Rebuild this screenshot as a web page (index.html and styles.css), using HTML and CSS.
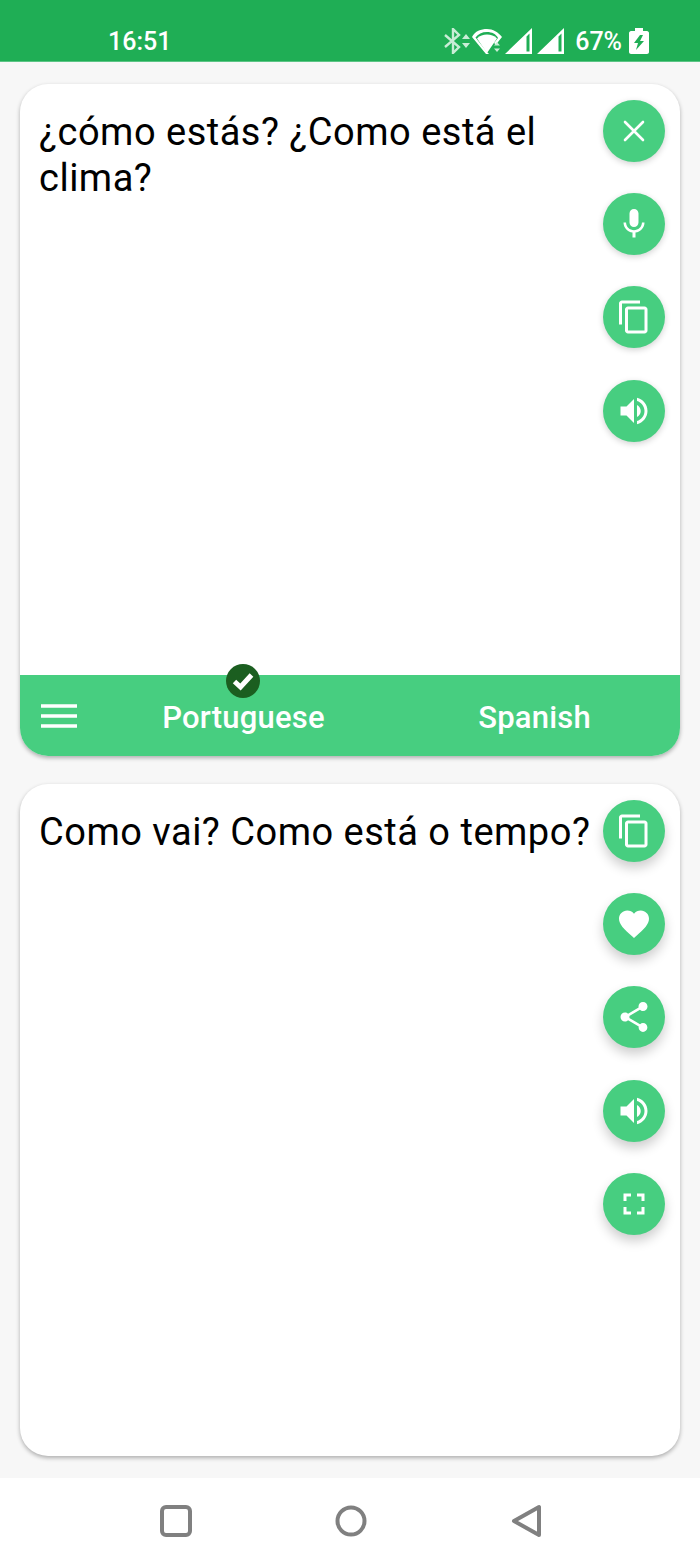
FILE: index.html

```html
<!DOCTYPE html>
<html lang="en">
<head>
    <meta charset="UTF-8">
    <meta name="viewport" content="width=device-width, initial-scale=1.0">
    <title>Translator</title>
    <link rel="stylesheet" href="styles.css">
</head>
<body>
    <!-- Status bar -->
    <header class="status-bar">
        <span class="time">16:51</span>
        <div class="status-icons">
            <svg class="icon-bt" viewBox="0 0 28 26" width="28" height="26">
                <path d="M2 7l14 12-6 6V1l6 6L2 19" fill="none" stroke="#c9edd6" stroke-width="2.400"/>
                <path d="M19 11l4-5 4 5zM19 15l4 5 4-5z" fill="#c9edd6"/>
            </svg>
            <svg class="icon-wifi" viewBox="0 0 30 26" width="30" height="26">
                <path d="M0 9C3 3 9 1 15 1s11 3 15 8l-6 7.500-2-1.500 4-5C24 6 20 4 15 4S6 6 3.500 9.500L15 24l2 2h-3z" fill="#fff"/>
                <path d="M5 10.500C8 7.500 11 6.500 15 6.500s7 1 10 4L15 25z" fill="#fff"/>
                <path d="M22 17.500l3-3.500 3 3.500zM22 20.500l3 3.500 3-3.500z" fill="#c9edd6"/>
            </svg>
            <svg class="icon-signal" viewBox="0 0 27 26" width="27" height="26">
                <path fill-rule="evenodd" d="M27 0v26H0zM21.500 8.500V23.500h3V5.500z" fill="#fff"/>
            </svg>
            <svg class="icon-signal" viewBox="0 0 27 26" width="27" height="26">
                <path fill-rule="evenodd" d="M27 0v26H0zM21.500 8.500V23.500h3V5.500z" fill="#fff"/>
            </svg>
            <span class="battery-text">67%</span>
            <svg class="icon-battery" viewBox="0 0 20 26" width="20" height="26">
                <path fill-rule="evenodd" d="M6 0h8v3h4c1 0 2 1 2 2v19c0 1-1 2-2 2H2c-1 0-2-1-2-2V5c0-1 1-2 2-2h4zM11 7l-6 8h4l-2 7 8-9h-4l3-6z" fill="#fff"/>
            </svg>
        </div>
    </header>

    <main class="content">
        <!-- Source card -->
        <section class="card">
            <div class="card-body">
                <p class="card-text">¿cómo estás? ¿Como está el clima?</p>
                <div class="fabs">
                    <button class="fab">
                        <svg viewBox="0 0 36 36" width="36" height="36"><path d="M9 9l18 18M27 9L9 27" fill="none" stroke="#fff" stroke-width="2.600" stroke-linecap="round"/></svg>
                    </button>
                    <button class="fab">
                        <svg viewBox="0 0 24 24" width="36" height="36"><path d="M12 14c1.660 0 2.990-1.340 2.990-3L15 5c0-1.660-1.340-3-3-3S9 3.340 9 5v6c0 1.660 1.340 3 3 3zm5.300-3c0 3-2.540 5.100-5.300 5.100S6.700 14 6.700 11H5c0 3.410 2.720 6.230 6 6.720V21h2v-3.280c3.280-.48 6-3.300 6-6.720h-1.700z" fill="#fff"/></svg>
                    </button>
                    <button class="fab">
                        <svg viewBox="0 0 24 24" width="36" height="36"><path d="M16 1H4c-1.100 0-2 .9-2 2v14h2V3h12V1zm3 4H8c-1.100 0-2 .9-2 2v14c0 1.100.9 2 2 2h11c1.100 0 2-.9 2-2V7c0-1.100-.9-2-2-2zm0 16H8V7h11v14z" fill="#fff"/></svg>
                    </button>
                    <button class="fab">
                        <svg viewBox="0 0 24 24" width="36" height="36"><path d="M3 9v6h4l5 5V4L7 9H3zm13.500 3c0-1.770-1.020-3.290-2.500-4.030v8.050c1.480-.73 2.500-2.250 2.500-4.020zM14 3.230v2.060c2.890.86 5 3.540 5 6.710s-2.110 5.850-5 6.710v2.060c4.010-.91 7-4.490 7-8.770s-2.990-7.860-7-8.770z" fill="#fff"/></svg>
                    </button>
                </div>
            </div>
            <div class="lang-bar">
                <svg class="menu-icon" viewBox="0 0 36 24" width="36" height="24"><path d="M0 2h36M0 12h36M0 22h36" stroke="#fff" stroke-width="3.600" fill="none"/></svg>
                <button class="lang">Portuguese
                    <span class="lang-check">
                        <svg viewBox="0 0 34 34" width="34" height="34"><path d="M8.500 17.500l6 5.500 11-12" fill="none" stroke="#fff" stroke-width="5"/></svg>
                    </span>
                </button>
                <button class="lang">Spanish</button>
            </div>
        </section>

        <!-- Result card -->
        <section class="card">
            <div class="card-body">
                <p class="card-text">Como vai? Como está o tempo?</p>
                <div class="fabs fabs-raised">
                    <button class="fab">
                        <svg viewBox="0 0 24 24" width="36" height="36"><path d="M16 1H4c-1.100 0-2 .9-2 2v14h2V3h12V1zm3 4H8c-1.100 0-2 .9-2 2v14c0 1.100.9 2 2 2h11c1.100 0 2-.9 2-2V7c0-1.100-.9-2-2-2zm0 16H8V7h11v14z" fill="#fff"/></svg>
                    </button>
                    <button class="fab">
                        <svg viewBox="0 0 24 24" width="36" height="36"><path d="M12 21.350l-1.450-1.320C5.400 15.360 2 12.280 2 8.500 2 5.420 4.420 3 7.500 3c1.740 0 3.410.81 4.500 2.090C13.090 3.810 14.760 3 16.500 3 19.580 3 22 5.420 22 8.500c0 3.780-3.400 6.860-8.550 11.540L12 21.350z" fill="#fff"/></svg>
                    </button>
                    <button class="fab">
                        <svg viewBox="0 0 24 24" width="36" height="36"><path d="M18 16.080c-.76 0-1.440.3-1.960.77L8.910 12.700c.05-.23.09-.46.09-.7s-.04-.47-.09-.7l7.050-4.110c.54.5 1.250.81 2.040.81 1.660 0 3-1.340 3-3s-1.340-3-3-3-3 1.340-3 3c0 .24.04.47.09.7L8.040 9.810C7.500 9.310 6.790 9 6 9c-1.660 0-3 1.340-3 3s1.340 3 3 3c.79 0 1.500-.31 2.040-.81l7.120 4.160c-.05.21-.08.43-.08.65 0 1.610 1.310 2.920 2.920 2.920s2.920-1.310 2.920-2.920-1.310-2.920-2.920-2.920z" fill="#fff"/></svg>
                    </button>
                    <button class="fab">
                        <svg viewBox="0 0 24 24" width="36" height="36"><path d="M3 9v6h4l5 5V4L7 9H3zm13.500 3c0-1.770-1.020-3.290-2.500-4.030v8.050c1.480-.73 2.500-2.250 2.500-4.020zM14 3.230v2.060c2.890.86 5 3.540 5 6.710s-2.110 5.850-5 6.710v2.060c4.010-.91 7-4.490 7-8.770s-2.990-7.860-7-8.770z" fill="#fff"/></svg>
                    </button>
                    <button class="fab">
                        <svg viewBox="0 0 24 24" width="36" height="36"><path d="M7 14H5v5h5v-2H7v-3zm-2-4h2V7h3V5H5v5zm12 7h-3v2h5v-5h-2v3zM14 5v2h3v3h2V5h-5z" fill="#fff"/></svg>
                    </button>
                </div>
            </div>
        </section>
    </main>

    <!-- Android nav bar -->
    <footer class="nav-bar">
        <svg viewBox="0 0 32 32" width="32" height="32"><rect x="2" y="2" width="28" height="28" rx="4" fill="none" stroke="#808080" stroke-width="4"/></svg>
        <svg viewBox="0 0 32 32" width="32" height="32"><circle cx="16" cy="16" r="13.500" fill="none" stroke="#808080" stroke-width="4"/></svg>
        <svg viewBox="0 0 32 34" width="32" height="34"><path d="M29 3v28L4 17z" fill="none" stroke="#808080" stroke-width="4" stroke-linejoin="round"/></svg>
    </footer>
</body>
</html>
```

FILE: styles.css

```css
* {
    box-sizing: border-box;
}

body {
    margin: 0;
    height: 1564px;
    display: flex;
    flex-direction: column;
    overflow: hidden;
    background-color: #f7f7f7;
    font-family: Roboto, "Liberation Sans", sans-serif;
}

.status-bar {
    height: 62px;
    flex: none;
    display: flex;
    align-items: center;
    justify-content: space-between;
    padding: 21px 51px 0 108px;
    background-color: #1fae55;
    border-bottom: 1px solid #5cc585;
    color: #fff;
}

.time {
    font-size: 25px;
    font-weight: 500;
}

.status-icons {
    display: flex;
    align-items: center;
}

.icon-wifi {
    margin-left: 1px;
}

.icon-signal {
    margin-left: 3px;
}

.icon-signal + .icon-signal {
    margin-left: 5px;
}

.battery-text {
    margin: 0 7px 0 11px;
    font-size: 25px;
    font-weight: 500;
}

.content {
    flex: 1;
    display: flex;
    flex-direction: column;
    gap: 28px;
    padding: 22px 20px;
}

.card {
    flex: 1;
    display: flex;
    flex-direction: column;
    border-radius: 28px;
    background-color: #fff;
    box-shadow: 0 2px 4px rgba(0, 0, 0, 0.3);
}

.card-body {
    flex: 1;
    position: relative;
    padding: 25px 85px 0 19px;
}

.card-text {
    margin: 0;
    font-size: 38px;
    line-height: 46px;
    letter-spacing: 0.5px;
    color: #000;
}

.fabs {
    position: absolute;
    top: 16px;
    right: 15px;
    display: flex;
    flex-direction: column;
    gap: 31.2px;
}

.fab {
    width: 62px;
    height: 62px;
    padding: 0;
    display: flex;
    align-items: center;
    justify-content: center;
    border: none;
    border-radius: 50%;
    background-color: #47ce80;
    box-shadow: 0 2px 6px rgba(0, 0, 0, 0.18);
}

.fabs-raised .fab {
    box-shadow: 0 6px 12px rgba(0, 0, 0, 0.2);
}

.lang-bar {
    height: 81px;
    flex: none;
    display: grid;
    grid-template-columns: 78px 291px 291px;
    align-items: center;
    border-radius: 0 0 28px 28px;
    background-color: #47ce80;
}

.menu-icon {
    margin: 0 0 0 21px;
}

.lang {
    position: relative;
    padding: 4px 0 0;
    border: none;
    background: none;
    color: #fff;
    font-family: inherit;
    font-size: 31px;
    font-weight: 500;
    letter-spacing: 0.2px;
}

.lang-check {
    position: absolute;
    top: -31px;
    left: 128px;
    width: 34px;
    height: 34px;
    border-radius: 50%;
    background-color: #1b5e20;
}

.lang-check svg {
    display: block;
}

.nav-bar {
    height: 86px;
    flex: none;
    display: grid;
    grid-template-columns: repeat(3, 175px);
    justify-content: center;
    justify-items: center;
    align-items: center;
    padding-left: 1px;
    background-color: #fff;
}
```
